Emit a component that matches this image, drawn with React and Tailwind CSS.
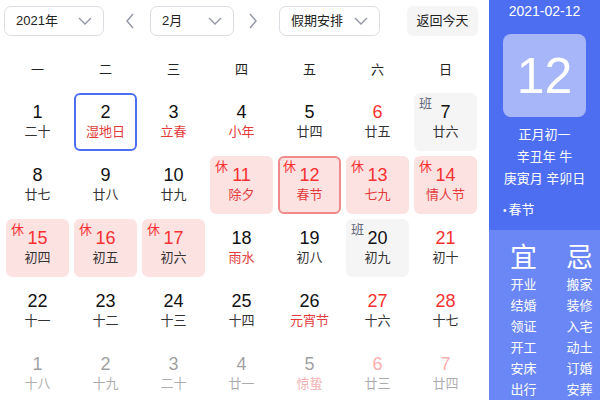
import React from "react";

const F = { fontFamily: '"Liberation Sans", "Noto Sans CJK SC", sans-serif' };

const Chevron = ({ className = "" }) => (
  <svg width="14" height="8" viewBox="0 0 14 8" className={className}>
    <polyline points="1,1 7,7 13,1" fill="none" stroke="#9195a3" strokeWidth="1.3" />
  </svg>
);

const Arrow = ({ dir }) => (
  <svg width="10" height="16" viewBox="0 0 10 16">
    <polyline
      points={dir === "l" ? "8,1 2,8 8,15" : "2,1 8,8 2,15"}
      fill="none"
      stroke="#9195a3"
      strokeWidth="1.4"
    />
  </svg>
);

const rows = [
  [
    { d: 1, l: "二十" },
    { d: 2, l: "湿地日", lr: 1, today: 1 },
    { d: 3, l: "立春", lr: 1 },
    { d: 4, l: "小年", lr: 1 },
    { d: 5, l: "廿四" },
    { d: 6, l: "廿五", dr: 1 },
    { d: 7, l: "廿六", ban: 1 },
  ],
  [
    { d: 8, l: "廿七" },
    { d: 9, l: "廿八" },
    { d: 10, l: "廿九" },
    { d: 11, l: "除夕", xiu: 1, dr: 1, lr: 1 },
    { d: 12, l: "春节", xiu: 1, dr: 1, lr: 1, sel: 1 },
    { d: 13, l: "七九", xiu: 1, dr: 1, lr: 1 },
    { d: 14, l: "情人节", xiu: 1, dr: 1, lr: 1 },
  ],
  [
    { d: 15, l: "初四", xiu: 1, dr: 1 },
    { d: 16, l: "初五", xiu: 1, dr: 1 },
    { d: 17, l: "初六", xiu: 1, dr: 1 },
    { d: 18, l: "雨水", lr: 1 },
    { d: 19, l: "初八" },
    { d: 20, l: "初九", ban: 1 },
    { d: 21, l: "初十", dr: 1 },
  ],
  [
    { d: 22, l: "十一" },
    { d: 23, l: "十二" },
    { d: 24, l: "十三" },
    { d: 25, l: "十四" },
    { d: 26, l: "元宵节", lr: 1 },
    { d: 27, l: "十六", dr: 1 },
    { d: 28, l: "十七", dr: 1 },
  ],
  [
    { d: 1, l: "十八", f: 1 },
    { d: 2, l: "十九", f: 1 },
    { d: 3, l: "二十", f: 1 },
    { d: 4, l: "廿一", f: 1 },
    { d: 5, l: "惊蛰", lr: 1, f: 1 },
    { d: 6, l: "廿三", dr: 1, f: 1 },
    { d: 7, l: "廿四", dr: 1, f: 1 },
  ],
];

function Cell({ c }) {
  let box = "border-2 border-transparent";
  if (c.xiu) box = "bg-[#fde2e2] border-2 border-[#fde2e2]";
  if (c.sel) box = "bg-[#fde2e2] border-2 border-[#ee8a8a]";
  if (c.ban) box = "bg-[#f5f5f6] border-2 border-[#f5f5f6]";
  if (c.today) box = "border-2 border-[#4e6ef2]";
  return (
    <div
      className={`relative h-[58px] rounded-[6px] flex flex-col items-center ${box} ${
        c.f ? "opacity-40" : ""
      }`}
    >
      {c.xiu ? (
        <span className="absolute left-[3px] top-[0px] text-[13px] leading-[18px] text-[#f73131]">
          休
        </span>
      ) : null}
      {c.ban ? (
        <span className="absolute left-[3px] top-[0px] text-[13px] leading-[18px] text-[#626675]">
          班
        </span>
      ) : null}
      <span
        className={`mt-[6px] text-[18px] leading-[22px] ${
          c.dr ? "text-[#f73131]" : "text-[#111]"
        }`}
      >
        {c.d}
      </span>
      <span
        className={`text-[13px] leading-[18px] ${
          c.lr ? "text-[#e33b3b]" : "text-[#333]"
        }`}
      >
        {c.l}
      </span>
    </div>
  );
}

export default function App() {
  const yi = ["开业", "结婚", "领证", "开工", "安床", "出行"];
  const ji = ["搬家", "装修", "入宅", "动土", "订婚", "安葬"];
  return (
    <div className="w-[600px] h-[400px] overflow-hidden flex bg-white" style={F}>
      <div className="w-[489px] shrink-0">
        <div className="flex items-center h-[30px] mt-[6px] text-[13px] text-[#222]">
          <div className="ml-[4px] w-[100px] h-[30px] border border-[#dcdde2] rounded-[7px] flex items-center justify-between pl-[11px] pr-[11px]">
            <span>2021年</span>
            <Chevron />
          </div>
          <div className="ml-[21px]">
            <Arrow dir="l" />
          </div>
          <div className="ml-[15px] w-[84px] h-[30px] border border-[#dcdde2] rounded-[7px] flex items-center justify-between pl-[11px] pr-[11px]">
            <span>2月</span>
            <Chevron />
          </div>
          <div className="ml-[14px]">
            <Arrow dir="r" />
          </div>
          <div className="ml-[21px] w-[101px] h-[30px] border border-[#dcdde2] rounded-[7px] flex items-center justify-between pl-[11px] pr-[11px]">
            <span>假期安排</span>
            <Chevron />
          </div>
          <div className="ml-[27px] w-[71px] h-[30px] bg-[#f5f5f6] rounded-[6px] flex items-center justify-center">
            返回今天
          </div>
        </div>
        <div className="grid grid-cols-[repeat(7,63px)] gap-x-[5px] ml-[6px] mt-[24px] text-[13px] text-[#222] leading-[20px]">
          {["一", "二", "三", "四", "五", "六", "日"].map((w) => (
            <div key={w} className="text-center">
              {w}
            </div>
          ))}
        </div>
        <div className="grid grid-cols-[repeat(7,63px)] gap-x-[5px] gap-y-[5px] ml-[6px] mt-[13px]">
          {rows.flat().map((c, i) => (
            <Cell key={i} c={c} />
          ))}
        </div>
      </div>
      <div className="flex-1 flex flex-col text-white">
        <div className="bg-[#4e6ef2] h-[232px] flex flex-col items-center">
          <div className="text-[14px] leading-[20px] mt-[1px]">2021-02-12</div>
          <div className="mt-[13px] w-[83px] h-[83px] rounded-[8px] bg-[#a6b6f8] flex items-center justify-center text-[50px] leading-none">
            12
          </div>
          <div className="mt-[7px] text-[13px] leading-[22px] text-center">
            <div>正月初一</div>
            <div>辛丑年 牛</div>
            <div>庚寅月 辛卯日</div>
          </div>
          <div className="self-start ml-[14px] mt-[11px] text-[13px] leading-[18px]">
            <span className="text-[10px] mr-[2px]">•</span>春节
          </div>
        </div>
        <div className="flex-1 bg-[#6b87f5] flex pl-[21px] gap-[29px] pt-[12px]">
          <div className="flex flex-col items-center">
            <div className="text-[27px] leading-[32px]">宜</div>
            <div className="text-[13px] leading-[21px] text-center">
              {yi.map((t) => (
                <div key={t}>{t}</div>
              ))}
            </div>
          </div>
          <div className="flex flex-col items-center">
            <div className="text-[27px] leading-[32px]">忌</div>
            <div className="text-[13px] leading-[21px] text-center">
              {ji.map((t) => (
                <div key={t}>{t}</div>
              ))}
            </div>
          </div>
        </div>
      </div>
    </div>
  );
}
